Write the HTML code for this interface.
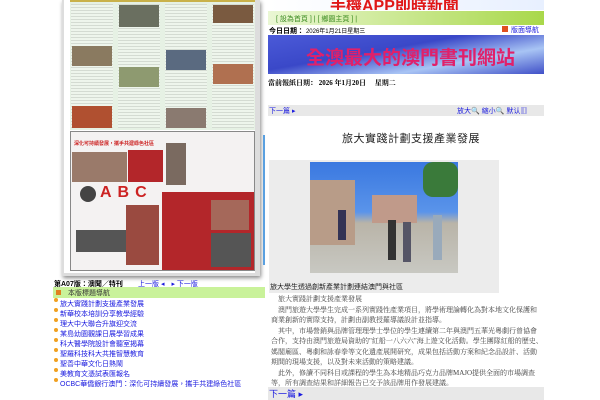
<!DOCTYPE html>
<html><head><meta charset="utf-8"><style>
*{margin:0;padding:0;box-sizing:border-box}
body{width:600px;height:400px;overflow:hidden;background:#fff;position:relative;font-family:"Liberation Sans","Noto Sans CJK TC",sans-serif;font-size:7px;color:#000}
.a{position:absolute}
.blue{color:#1a1adf}
.li{position:absolute;left:54px;font-size:7px;color:#1a1adf;white-space:nowrap}
.li:before{content:"";display:inline-block;width:4px;height:4px;border-radius:2px;background:#f0a020;margin-right:2px;vertical-align:4px}
.tx{position:absolute;left:271px;width:272px;font-family:"Liberation Serif","Noto Serif CJK SC",serif;font-size:7px;color:#444;line-height:10.5px}
.col{position:absolute;top:4px;width:42px;height:124px;background:repeating-linear-gradient(180deg,#d4dbd2 0,#d4dbd2 1px,#eef5ec 1px,#eef5ec 3px)}
</style></head><body>
<!-- newspaper -->
<div class="a" style="left:62px;top:0;width:198px;height:276px;background:#ddd;box-shadow:1px 2px 4px #888"></div>
<div class="a" style="left:64px;top:0;width:191px;height:273px;background:#fff"></div>
<div class="a" style="left:70px;top:0;width:185px;height:130px;background:#e6f1e4"></div>
<div class="a" style="left:70px;top:0;width:185px;height:2px;background:#c9b14a"></div>
<div class="col" style="left:71px"></div><div class="col" style="left:118px"></div><div class="col" style="left:165px"></div><div class="col" style="left:212px"></div>
<div class="a" style="left:72px;top:46px;width:40px;height:20px;background:#8a7a60"></div>
<div class="a" style="left:119px;top:5px;width:40px;height:22px;background:#6a6f60"></div>
<div class="a" style="left:119px;top:67px;width:40px;height:20px;background:#8e9a70"></div>
<div class="a" style="left:166px;top:50px;width:40px;height:20px;background:#5a6a80"></div>
<div class="a" style="left:166px;top:108px;width:40px;height:20px;background:#8a7a70"></div>
<div class="a" style="left:213px;top:5px;width:40px;height:18px;background:#7a5a40"></div>
<div class="a" style="left:213px;top:64px;width:40px;height:20px;background:#b07050"></div>
<div class="a" style="left:72px;top:106px;width:40px;height:22px;background:#b05030"></div>
<div class="a" style="left:70px;top:131px;width:185px;height:140px;background:#f4f2f2;border:1px solid #888"></div>
<div class="a" style="left:74px;top:140px;font-size:5px;color:#c22;font-weight:bold">深化可持續發展，攜手共建綠色社區</div>
<div class="a" style="left:72px;top:152px;width:55px;height:30px;background:#9a7a6a"></div>
<div class="a" style="left:128px;top:150px;width:35px;height:32px;background:#b3262a"></div>
<div class="a" style="left:166px;top:143px;width:20px;height:42px;background:#7a6a60"></div>
<div class="a" style="left:80px;top:186px;width:16px;height:16px;border-radius:8px;background:#444"></div>
<div class="a" style="left:100px;top:184px;font-size:16px;font-weight:bold;color:#c22;letter-spacing:6px">ABC</div>
<div class="a" style="left:76px;top:230px;width:50px;height:22px;background:#555"></div>
<div class="a" style="left:126px;top:205px;width:33px;height:60px;background:#9a4a40"></div>
<div class="a" style="left:162px;top:192px;width:92px;height:78px;background:#b3262a"></div>
<div class="a" style="left:211px;top:200px;width:38px;height:30px;background:#a5685a"></div>
<div class="a" style="left:211px;top:233px;width:40px;height:34px;background:#555"></div>
<div class="a" style="left:263px;top:135px;width:2px;height:130px;background:#5aa0e0"></div>
<!-- left list -->
<div class="a" style="left:54px;top:279px;font-size:7px;font-weight:bold">第A07版：澳聞／特刊</div>
<div class="a blue" style="left:138px;top:279px">上一版 ◂　▸ 下一版</div>
<div class="a" style="left:53px;top:287px;width:212px;height:11px;background:#c9f29a"></div>
<div class="a" style="left:56px;top:290px;width:5px;height:5px;background:#e08020"></div>
<div class="a" style="left:68px;top:288px;color:#333">本版標題導航</div>
<div class="li" style="top:298px">旅大實踐計劃支援產業發展</div>
<div class="li" style="top:308px">新華校本培訓分享教學經驗</div>
<div class="li" style="top:318px">理大中大聯合升旗迎交流</div>
<div class="li" style="top:328px">某島幼園觀課日展學習成果</div>
<div class="li" style="top:338px">科大醫學院設計會聽室揭幕</div>
<div class="li" style="top:348px">聖羅科技科大共推智慧教育</div>
<div class="li" style="top:358px">聖善中華文化日熱鬧</div>
<div class="li" style="top:368px">美教育文憑試表匯報名</div>
<div class="li" style="top:378px">OCBC華僑銀行澳門：深化可持續發展，攜手共建綠色社區</div>
<!-- right header -->
<div class="a" style="left:268px;top:0;width:276px;height:10px;background:linear-gradient(90deg,#fff,#e8f0ff);overflow:hidden">
<div class="a" style="left:62px;top:-8px;font-size:16px;font-weight:bold;color:#e01818;white-space:nowrap">手機APP即時新聞</div></div>
<div class="a" style="left:268px;top:11px;width:276px;height:14px;background:linear-gradient(90deg,#eaf7d4,#a9d84a)"></div>
<div class="a" style="left:276px;top:14px;color:#3a8a20">[ 設為首頁 ] | [ 鄉園主頁 ] |</div>
<div class="a" style="left:269px;top:26px;font-size:7px"><b>今日日期：</b> <span style="font-size:6px">2026年1月21日星期三</span></div>
<div class="a" style="left:502px;top:26px;width:6px;height:6px;background:#e05020"></div>
<div class="a blue" style="left:511px;top:25px">版面導航</div>
<div class="a" style="left:268px;top:35px;width:276px;height:39px;background:linear-gradient(170deg,#4b5ad8,#3a48c8 40%,#a8c4f4 70%,#4050c8)"></div>
<div class="a" style="left:306px;top:43px;font-size:19px;font-weight:bold;color:#e0206a;white-space:nowrap">全澳最大的澳門書刊網站</div>
<div class="a" style="left:268px;top:78px;font-family:'Liberation Serif','Noto Serif CJK SC',serif;font-size:7px;font-weight:bold;white-space:nowrap">當前報紙日期： 2026 年1月20日　 星期二</div>
<div class="a" style="left:268px;top:105px;width:276px;height:11px;background:#e8e8e8"></div>
<div class="a blue" style="left:269px;top:106px">下一篇 ▸</div>
<div class="a blue" style="left:457px;top:106px">放大🔍 縮小🔍 默认▥</div>
<div class="a" style="left:342px;top:130px;font-size:11px;color:#222;letter-spacing:.5px">旅大實踐計劃支援產業發展</div>
<div class="a" style="left:269px;top:160px;width:230px;height:133px;background:#ececec"></div>
<div class="a" style="left:310px;top:162px;width:148px;height:111px;background:linear-gradient(180deg,#3a78e0 0,#5a94ea 45%,#b9b4a8 55%,#c8c8c2 100%)"></div>
<div class="a" style="left:310px;top:180px;width:45px;height:65px;background:#b89c88"></div>
<div class="a" style="left:372px;top:195px;width:45px;height:28px;background:#c09a8a"></div>
<div class="a" style="left:423px;top:162px;width:35px;height:35px;background:#3a7a3a;border-radius:10px"></div>
<div class="a" style="left:338px;top:210px;width:8px;height:30px;background:#335"></div>
<div class="a" style="left:388px;top:220px;width:8px;height:40px;background:#333"></div>
<div class="a" style="left:403px;top:222px;width:8px;height:40px;background:#556"></div>
<div class="a" style="left:433px;top:215px;width:9px;height:45px;background:#9ab"></div>
<div class="a" style="left:270px;top:282px;font-size:7px;color:#222">旅大學生透過創新產業計劃連結澳門與社區</div>
<div class="tx" style="top:294px">　旅大實踐計劃支援產業發展<br>　澳門旅遊大學學生完成一系列實踐性產業項目，將學術理論轉化為對本地文化保護和商業創新的實際支持，計劃由副教授羅導議設計並指導。<br>　其中，市場營銷與品牌管理理學士學位的學生連續第二年與澳門五華光粵劇行曾協會合作，支持由澳門旅遊局資助的"紅船一八六六"海上遊文化活動。學生團隊紅船的歷史、媽閣廟區、粵劇和詠春拳等文化遺產展開研究，成果包括活動方案和紀念品設計、活動期間的現場支援，以及對未來活動的策略建議。<br>　此外，修讀不同科目或課程的學生為本地精品巧克力品牌MAJO提供全面的市場調查等，所有調查結果和詳細報告已交予該品牌用作發展建議。</div>
<div class="a" style="left:268px;top:387px;width:276px;height:13px;background:#e8e8e8"></div>
<div class="a blue" style="left:269px;top:387px;font-size:9px">下一篇 ▸</div>
</body></html>
